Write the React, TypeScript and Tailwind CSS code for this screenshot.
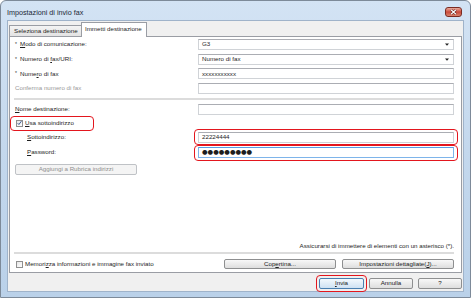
import React from "react";

type Kids = { children?: React.ReactNode };

function Input({ children, focus, combo }: Kids & { focus?: boolean; combo?: boolean }) {
  return (
    <div
      className={`w-[256px] h-[11px] flex items-center justify-between bg-white border pl-[3px] pr-[4px] ${
        focus ? "border-[#7eb4ea] border-t-[#569de5]" : "border-[#d0d3d7] border-t-[#abadb3]"
      }`}
    >
      <span className="text-[6.2px] leading-none">{children}</span>
      {combo && (
        <svg width="4" height="3" viewBox="0 0 4 3">
          <path d="M0 0.5 H4 L2 2.8 Z" fill="#222" />
        </svg>
      )}
    </div>
  );
}

function Row({
  label,
  star,
  disabled,
  indent,
  children,
}: Kids & { label: React.ReactNode; star?: boolean; disabled?: boolean; indent?: boolean }) {
  return (
    <div className="flex items-center h-[11px]">
      <div className={`w-[184px] flex items-center ${indent ? "pl-[13px]" : "pl-[1px]"}`}>
        {star && <span className="w-[5px] text-[5px] leading-none text-[#333]">*</span>}
        <span className={`text-[6.2px] leading-none ${disabled ? "text-[#9a9a9a]" : ""}`}>{label}</span>
      </div>
      {children}
    </div>
  );
}

function Btn({
  children,
  className,
  disabled,
  primary,
}: Kids & { className?: string; disabled?: boolean; primary?: boolean }) {
  const look = disabled
    ? "border-[#bfc2c6] bg-[#f4f4f4] text-[#8f8f8f]"
    : primary
    ? "border-[#4a7fb0] bg-gradient-to-b from-[#f4f9fd] to-[#cfe2f3] text-[#222]"
    : "border-[#8e8f90] bg-gradient-to-b from-[#f8f8f8] to-[#dedede] text-[#222]";
  return (
    <div className={`flex items-center justify-center rounded-[2px] border text-[6.2px] leading-none ${look} ${className ?? ""}`}>
      {children}
    </div>
  );
}

function Check({ checked }: { checked?: boolean }) {
  return (
    <div className="w-[7px] h-[7px] border border-[#8f8f8f] bg-gradient-to-br from-[#e6e6e6] to-white flex items-center justify-center">
      {checked && (
        <svg width="6" height="6" viewBox="0 0 6 6">
          <path d="M0.8 3.2 L2.3 4.8 L5.3 0.8" fill="none" stroke="#2c4f8c" strokeWidth="1.1" />
        </svg>
      )}
    </div>
  );
}

const Red = ({ className }: { className: string }) => (
  <span className={`absolute border-[1.5px] border-[#e3161e] rounded-[4px] pointer-events-none ${className}`} />
);

export default function App() {
  return (
    <div className="w-[471px] h-[298px] flex flex-col border border-[#7d8a99] rounded-t-[6px] bg-gradient-to-b from-[#d3e3f4] via-[#c4d8ed] to-[#bad1e9] text-[#1e1e1e] font-['Liberation_Sans',Arial,sans-serif] overflow-hidden">
      {/* title bar */}
      <div className="h-[19px] flex items-start justify-between pl-[6px] pr-[8px]">
        <span className="mt-[7px] text-[7.2px] leading-[9px] text-[#1b2838]">Impostazioni di invio fax</span>
        <div className="mt-[6px] w-[17px] h-[10px] rounded-[3px] border border-[#7a2b22] bg-gradient-to-b from-[#e9aa9c] via-[#c9483a] to-[#d8826c] flex items-center justify-center">
          <svg width="7" height="6" viewBox="0 0 7 6">
            <path d="M1 0.8 L6 5.2 M6 0.8 L1 5.2" stroke="#5a1a14" strokeWidth="2.2" />
            <path d="M1 0.8 L6 5.2 M6 0.8 L1 5.2" stroke="#fff" strokeWidth="1.2" />
          </svg>
        </div>
      </div>

      {/* client area */}
      <div className="flex-1 mx-[6px] mb-[5px] border border-[#9fb3ca] bg-[#f0f0f0] flex flex-col px-[1px]">
        {/* tabs */}
        <div className="relative z-10 mt-[1px] h-[15px] flex items-end">
          <div className="mb-[1px] w-[73px] h-[11px] border border-b-0 border-[#9a9da4] bg-gradient-to-b from-[#f4f4f4] to-[#e3e3e3] flex items-center pl-[4px] text-[6.2px] leading-none">
            Seleziona destinazione
          </div>
          <div className="-ml-[1px] w-[66px] h-[15px] border border-b-0 border-[#9a9da4] bg-white flex items-center pl-[3px] pb-[1px] text-[6.2px] leading-none">
            Immetti destinazione
          </div>
        </div>

        {/* panel */}
        <div className="-mt-[1px] flex-1 border border-[#9a9da4] bg-white flex flex-col pl-[4px] pr-[7px] pt-[2px] pb-[3px]">
          <div className="flex flex-col gap-[3.67px]">
            <Row star label={<><u>M</u>odo di comunicazione:</>}>
              <Input combo>G3</Input>
            </Row>
            <Row star label={<>Numero di <u>f</u>ax/URI:</>}>
              <Input combo>Numero di fax</Input>
            </Row>
            <Row star label={<>Nume<u>r</u>o di fax</>}>
              <Input>xxxxxxxxxxx</Input>
            </Row>
            <Row disabled label="Conferma numero di fax">
              <Input />
            </Row>
          </div>

          <div className="mt-[4px] h-[2px] bg-[#dcdcdc]" />

          <div className="mt-[4px]">
            <Row label={<><u>N</u>ome destinazione:</>}>
              <Input />
            </Row>
          </div>

          <div className="relative mt-[3px] h-[11px] flex items-center self-start">
            <div className="ml-[2px]">
              <Check checked />
            </div>
            <span className="ml-[2px] text-[6.2px] leading-none">
              <u>U</u>sa sottoindirizzo
            </span>
            <Red className="-left-[4px] -top-[2px] w-[84px] h-[15px]" />
          </div>

          <div className="mt-[3px]">
            <Row indent label={<><u>S</u>ottoindirizzo:</>}>
              <div className="relative">
                <Input>22224444</Input>
                <Red className="-left-[4px] -right-[4px] -top-[3px] -bottom-[2px]" />
              </div>
            </Row>
          </div>

          <div className="mt-[4px]">
            <Row indent label={<><u>P</u>assword:</>}>
              <div className="relative">
                <Input focus>
                  <span className="font-['DejaVu_Sans',sans-serif] text-[6.4px]">●●●●●●●●●</span>
                </Input>
                <Red className="-left-[4px] -right-[4px] -top-[2px] -bottom-[3px]" />
              </div>
            </Row>
          </div>

          <Btn disabled className="mt-[6px] ml-[1px] w-[122px] h-[11px]">
            Aggiungi a Rubrica indirizzi
          </Btn>

          <div className="flex-1" />

          <div className="h-[8px] flex items-center justify-end text-[6.2px] leading-none">
            Assicurarsi di immettere di elementi con un asterisco (*).
          </div>

          <div className="mt-[2px] h-[2px] bg-[#dcdcdc]" />

          <div className="mt-[5px] h-[10px] flex items-center">
            <div className="ml-[2px]">
              <Check />
            </div>
            <span className="ml-[2px] text-[6.2px] leading-none">
              Memori<u>z</u>za informazioni e immagine fax inviato
            </span>
            <div className="flex-1" />
            <Btn className="w-[112px] h-[10px]">
              Cop<u>e</u>rtina...
            </Btn>
            <Btn className="ml-[6px] w-[112px] h-[10px]">
              Impostazioni dettagliate(<u>J</u>)...
            </Btn>
          </div>
        </div>

        {/* dialog buttons */}
        <div className="mt-[5px] mb-[2px] h-[11px] flex justify-end gap-[5px]">
          <div className="relative">
            <Btn primary className="w-[45px] h-[11px]">
              <u>I</u>nvia
            </Btn>
            <Red className="-left-[3px] -right-[3px] -top-[3px] -bottom-[3px]" />
          </div>
          <Btn className="w-[44px] h-[11px]">Annulla</Btn>
          <Btn className="w-[44px] h-[11px]">?</Btn>
        </div>
      </div>
    </div>
  );
}
